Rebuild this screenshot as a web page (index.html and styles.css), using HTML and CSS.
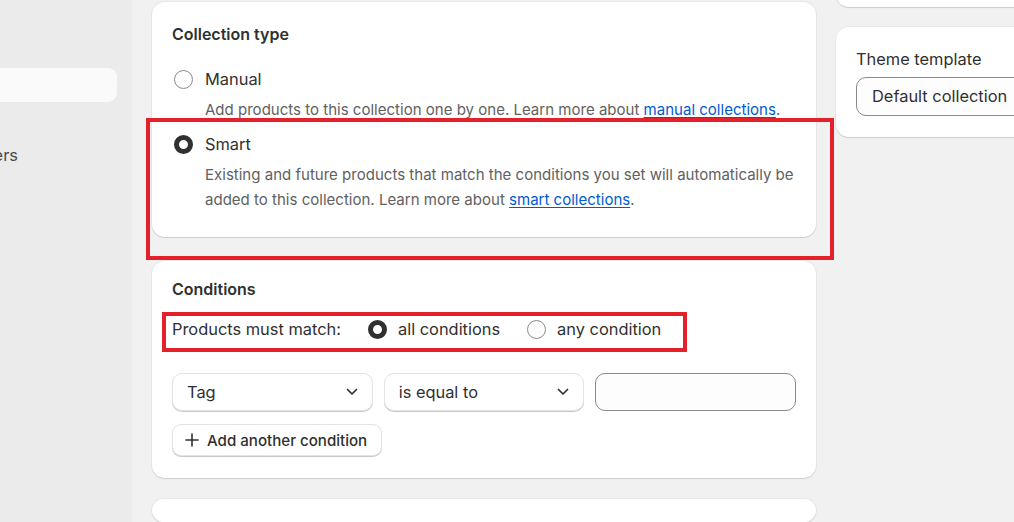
FILE: index.html
```html
<!DOCTYPE html>
<html lang="en">
<head>
<meta charset="utf-8">
<title>Collection</title>
<link rel="stylesheet" href="styles.css">
</head>
<body>
<div class="app">
  <aside class="sidebar">
    <div class="nav-item nav-active"></div>
    <div class="nav-item nav-clip"><span class="nav-text">Customers</span></div>
  </aside>
  <main class="content">
    <div class="primary">
      <section class="card type-card">
        <h2 class="card-title">Collection type</h2>
        <div class="option">
          <div class="option-row">
            <span class="radio-slot"><span class="radio"></span></span>
            <span class="option-label">Manual</span>
          </div>
          <p class="option-desc">Add products to this collection one by one. Learn more about <a href="#">manual collections</a>.</p>
        </div>
        <div class="option option-second">
          <div class="option-row">
            <span class="radio-slot"><span class="radio radio-on"></span></span>
            <span class="option-label">Smart</span>
          </div>
          <p class="option-desc">Existing and future products that match the conditions you set will automatically be added to this collection. Learn more about <a href="#">smart collections</a>.</p>
        </div>
      </section>

      <section class="card conditions-card">
        <h2 class="card-title">Conditions</h2>
        <div class="match-row">
          <span class="match-label">Products must match:</span>
          <span class="match-choice"><span class="radio radio-on"></span><span>all conditions</span></span>
          <span class="match-choice"><span class="radio"></span><span>any condition</span></span>
          <div class="annot annot-match"></div>
        </div>
        <div class="rule-row">
          <div class="select"><span>Tag</span>
            <svg class="chev" viewBox="0 0 12 8" width="12" height="8"><path d="M1.5 1.5 6 6l4.5-4.5" fill="none" stroke="#303030" stroke-width="1.7" stroke-linecap="round" stroke-linejoin="round"/></svg>
          </div>
          <div class="select"><span>is equal to</span>
            <svg class="chev" viewBox="0 0 12 8" width="12" height="8"><path d="M1.5 1.5 6 6l4.5-4.5" fill="none" stroke="#303030" stroke-width="1.7" stroke-linecap="round" stroke-linejoin="round"/></svg>
          </div>
          <div class="text-input"></div>
        </div>
        <button class="btn-add" type="button">
          <svg class="plus" viewBox="0 0 14 14" width="14" height="14"><path d="M7 1v12M1 7h12" fill="none" stroke="#303030" stroke-width="1.6" stroke-linecap="round"/></svg>
          <span>Add another condition</span>
        </button>
      </section>

      <section class="card empty-card"></section>

      <div class="annot annot-type"></div>
    </div>

    <div class="secondary">
      <section class="card top-card"></section>
      <section class="card theme-card">
        <div class="field-label">Theme template</div>
        <div class="select select-wide"><span>Default collection</span></div>
      </section>
    </div>
  </main>
</div>
</body>
</html>
```

FILE: styles.css
```css
* { box-sizing: border-box; }

html, body {
  margin: 0;
  padding: 0;
  width: 1014px;
  height: 522px;
  overflow: hidden;
  background: #f1f1f1;
  font-family: Inter, "Noto Sans", "Liberation Sans", sans-serif;
  color: #303030;
  font-size: 16.4px;
  line-height: 25px;
}

.app {
  display: flex;
  height: 522px;
}

.sidebar {
  width: 132px;
  flex: none;
  background: #ebebeb;
  padding-top: 68px;
}

.nav-item { height: 34px; }

.nav-active {
  margin-left: -20px;
  width: 137px;
  background: #fafafa;
  border-radius: 9px;
}

.nav-clip {
  margin-top: 36px;
  width: 18px;
  display: flex;
  justify-content: flex-end;
  align-items: center;
  white-space: nowrap;
}

.nav-text {
  color: #4a4a4a;
  font-size: 16.4px;
}

.content {
  display: flex;
  gap: 20px;
  padding-left: 20px;
}

.primary {
  position: relative;
  width: 664px;
  flex: none;
  display: flex;
  flex-direction: column;
  padding-top: 2px;
}

.secondary {
  width: 332px;
  flex: none;
  display: flex;
  flex-direction: column;
  gap: 20px;
}

.card {
  background: #ffffff;
  border-radius: 13px;
  box-shadow: 0 1px 1px rgba(0, 0, 0, 0.12), 0 0 0 1px rgba(0, 0, 0, 0.035);
}

.card-title {
  margin: 0;
  font-size: 16px;
  font-weight: 600;
  line-height: 25px;
}

/* Collection type card */
.type-card {
  padding: 20px 20px 25px;
}

.option { margin-top: 20px; }
.option-second { margin-top: 10px; }

.option-row {
  display: flex;
  align-items: center;
  height: 25px;
}

.radio-slot {
  width: 22px;
  display: flex;
  justify-content: center;
  margin-right: 11px;
}

.radio {
  width: 19px;
  height: 19px;
  flex: none;
  border-radius: 50%;
  border: 1px solid #8a8a8a;
  background: #fdfdfd;
}

.radio-on {
  border: 5.5px solid #303030;
  background: #ffffff;
}

.option-label { font-size: 16.4px; }

.option-desc {
  margin: 5px 0 0;
  padding-left: 33px;
  color: #616161;
  font-size: 15.04px;
  line-height: 25px;
}

.option-desc a {
  color: #005bd3;
  text-decoration: underline;
  text-underline-offset: 2px;
}

/* Conditions card */
.conditions-card {
  margin-top: 24px;
  padding: 16px 20px 22px;
}

.match-row {
  position: relative;
  display: flex;
  align-items: center;
  height: 25px;
  margin-top: 15px;
  gap: 27px;
}

.match-choice {
  display: flex;
  align-items: center;
  gap: 11px;
}

.rule-row {
  display: grid;
  grid-template-columns: repeat(3, 1fr);
  gap: 11px;
  margin-top: 31px;
}

.select {
  height: 38px;
  border-radius: 10px;
  border: 1px solid #e3e3e3;
  box-shadow: 0 1px 0 #c9c9c9;
  background: #ffffff;
  display: flex;
  align-items: center;
  justify-content: space-between;
  padding: 0 14px;
  font-size: 16.4px;
}

.chev { display: block; }

.text-input {
  height: 38px;
  border-radius: 10px;
  border: 1px solid #8a8a8a;
  background: #fdfdfd;
}

.btn-add {
  margin-top: 13px;
  height: 32px;
  display: inline-flex;
  align-items: center;
  align-self: flex-start;
  gap: 8px;
  padding: 0 14px 0 12px;
  border: 1px solid #e3e3e3;
  box-shadow: 0 1px 0 #c9c9c9;
  border-radius: 9px;
  background: #ffffff;
  font-family: inherit;
  font-size: 15.1px;
  font-weight: 550;
  color: #303030;
}

.empty-card {
  margin-top: 21px;
  height: 120px;
}

/* Secondary column */
.top-card {
  margin-top: -50px;
  height: 57px;
}

.theme-card {
  padding: 20px 20px 21px;
}

.field-label {
  font-size: 16.4px;
  line-height: 25px;
}

.select-wide {
  margin-top: 5px;
  height: 39px;
  border-color: #8a8a8a;
  box-shadow: none;
  background: #fdfdfd;
  padding-left: 15px;
}

/* Red annotation frames */
.annot {
  position: absolute;
  border: 4px solid #e4202b;
  pointer-events: none;
}

.annot-type {
  left: -6px;
  top: 118px;
  width: 688px;
  height: 142px;
}

.annot-match {
  left: -10px;
  top: -5px;
  width: 525px;
  height: 40px;
}
```
